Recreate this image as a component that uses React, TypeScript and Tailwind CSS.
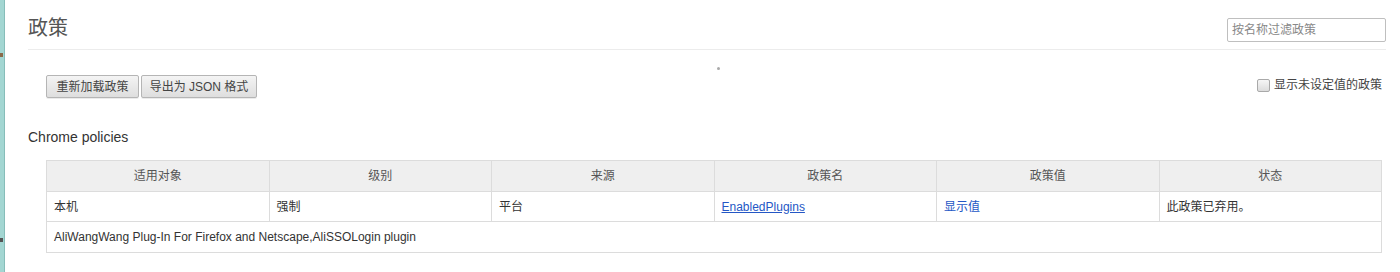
import { useState } from 'react';

const columns = ['适用对象', '级别', '来源', '政策名', '政策值', '状态'];

export default function App() {
  const [showUnset, setShowUnset] = useState(false);
  const [filter, setFilter] = useState('');

  return (
    <div
      className="flex h-[272px] bg-white text-[#333]"
      style={{ fontFamily: '"Liberation Sans", "Noto Sans CJK SC", sans-serif' }}
    >
      {/* Window edge strip */}
      <div className="relative w-[5px] shrink-0 bg-[#a3d6d2] border-r border-[#86bdb9]">
        <span className="absolute left-0 top-[53px] w-[3px] h-[4px] bg-[#8a6a4a]" />
        <span className="absolute left-0 top-[238px] w-[3px] h-[4px] bg-[#555]" />
      </div>

      <div className="relative flex-1 pl-[23px] pr-[14px]">
        {/* Header */}
        <div className="flex items-start justify-between pt-[18px] pb-[7px] border-b border-[#ececec]">
          <h1 className="text-[20px] leading-[20px] font-normal text-[#555]">政策</h1>
          <input
            type="text"
            value={filter}
            onChange={(e) => setFilter(e.target.value)}
            placeholder="按名称过滤政策"
            className="w-[159px] h-[24px] px-[4px] border border-[#bfbfbf] rounded-[2px] text-[12px] outline-none placeholder:text-[#888]"
          />
        </div>

        {/* Loading dot */}
        <span className="absolute left-[712px] top-[67px] w-[3px] h-[3px] rounded-full bg-[#aaa]" />

        {/* Actions */}
        <div className="flex items-center justify-between mt-[25px] pl-[18px] pr-[4px]">
          <div className="flex gap-[2px]">
            <button className="h-[23px] w-[93px] border border-[#b5b5b5] rounded-[2px] bg-gradient-to-b from-[#f4f4f4] to-[#dedede] text-[12px] text-[#444] shadow-[0_1px_0_rgba(0,0,0,0.08)]">
              重新加载政策
            </button>
            <button className="h-[23px] w-[116px] border border-[#b5b5b5] rounded-[2px] bg-gradient-to-b from-[#f4f4f4] to-[#dedede] text-[12px] text-[#444] shadow-[0_1px_0_rgba(0,0,0,0.08)]">
              导出为 JSON 格式
            </button>
          </div>
          <label className="flex items-center gap-[4px] text-[12px] text-[#444] cursor-pointer mt-[-3px]">
            <span
              onClick={() => setShowUnset(!showUnset)}
              className="w-[13px] h-[13px] border border-[#a9a9a9] rounded-[2px] bg-gradient-to-b from-[#f6f6f6] to-[#dcdcdc] flex items-center justify-center text-[10px] leading-none"
            >
              {showUnset ? '✓' : ''}
            </span>
            显示未设定值的政策
          </label>
        </div>

        {/* Policies */}
        <h2 className="mt-[29px] text-[14px] leading-[20px] font-normal text-[#333]">Chrome policies</h2>

        <div className="mt-[13px] ml-[18px] mr-[4px]">
          <table className="w-full table-fixed border-collapse text-[12px]">
            <thead>
              <tr className="h-[31px] bg-[#efefef]">
                {columns.map((c) => (
                  <th key={c} className="border border-[#dcdcdc] font-normal text-[#555] text-center">
                    {c}
                  </th>
                ))}
              </tr>
            </thead>
            <tbody>
              <tr className="h-[30px]">
                <td className="border border-[#dcdcdc] px-[7px]">本机</td>
                <td className="border border-[#dcdcdc] px-[7px]">强制</td>
                <td className="border border-[#dcdcdc] px-[7px]">平台</td>
                <td className="border border-[#dcdcdc] px-[7px]">
                  <a href="#" className="text-[#2457c5] underline">EnabledPlugins</a>
                </td>
                <td className="border border-[#dcdcdc] px-[7px]">
                  <a href="#" className="text-[#2457c5]">显示值</a>
                </td>
                <td className="border border-[#dcdcdc] px-[7px]">此政策已弃用。</td>
              </tr>
              <tr className="h-[31px]">
                <td colSpan={6} className="border border-[#dcdcdc] px-[7px]">
                  AliWangWang Plug-In For Firefox and Netscape,AliSSOLogin plugin
                </td>
              </tr>
            </tbody>
          </table>
        </div>
      </div>
    </div>
  );
}
